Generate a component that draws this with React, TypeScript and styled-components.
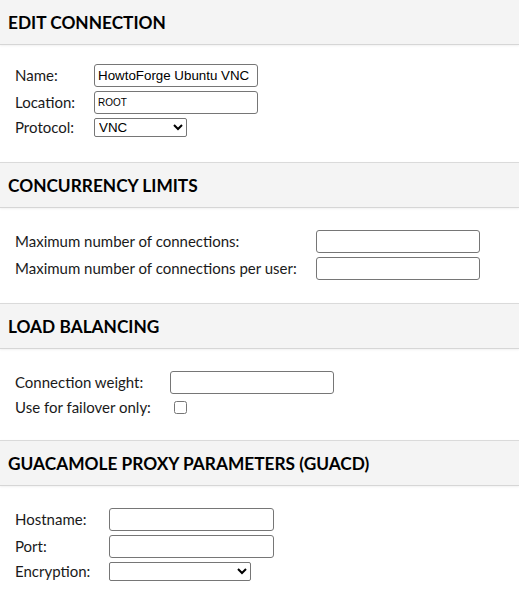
import React from "react";
import styled, { createGlobalStyle } from "styled-components";

const Global = createGlobalStyle`
  html, body { margin: 0; padding: 0; background: #fff; }
  body { font-family: Lato, "Noto Sans", sans-serif; color: #000; }
  * { box-sizing: border-box; }
`;

const Page = styled.div`
  display: flex;
  flex-direction: column;
  width: 519px;
`;

const Section = styled.section`
  display: flex;
  flex-direction: column;
`;

const Header = styled.h2<{ $first?: boolean }>`
  margin: 0;
  height: ${(p) => (p.$first ? "45px" : "46px")};
  display: flex;
  align-items: center;
  padding: 0 8px 0;
  background: #f4f4f4;
  border-top: ${(p) => (p.$first ? "none" : "1px solid #dadada")};
  border-bottom: 1px solid #d6d6d6;
  box-shadow: 0 1px 2px rgba(0, 0, 0, 0.06);
  font-family: Lato, "Noto Sans", sans-serif;
  font-weight: 700;
  font-size: 17.3px;
  letter-spacing: 0;
  color: #000;
`;

const Body = styled.div<{ $top: number; $bottom: number }>`
  padding: ${(p) => p.$top}px 16px ${(p) => p.$bottom}px 15px;
`;

const Props = styled.div`
  display: grid;
  grid-template-columns: max-content max-content;
  column-gap: 19px;
  align-items: center;
`;

const Label = styled.div`
  padding: 2px 0;
  font-size: 15px;
  line-height: 19px;
  color: #1a1a1a;
`;

const Cell = styled.div`
  padding: 2px 0;
  display: flex;
  align-items: center;
  min-height: 23px;
`;

const TextInput = styled.input<{ $w: number; $small?: boolean }>`
  width: ${(p) => p.$w}px;
  height: 23px;
  margin: 0;
  padding: 0 3px;
  border: 1px solid #767676;
  border-radius: 3px;
  font-family: "Liberation Sans", Arial, sans-serif;
  font-size: ${(p) => (p.$small ? "10px" : "13.33px")};
  color: #000;
  background: #fff;
  outline: none;
`;

const Select = styled.select<{ $w: number }>`
  width: ${(p) => p.$w}px;
  height: 19px;
  margin: 0;
  border: 1px solid #767676;
  border-radius: 2px;
  font-family: "Liberation Sans", Arial, sans-serif;
  font-size: 13.33px;
  background: #fff;
  color: #000;
`;

const Check = styled.input`
  width: 13px;
  height: 13px;
  margin: 3px 3px 3px 4px;
`;

export default function App() {
  return (
    <Page>
      <Global />
      <Section>
        <Header $first>EDIT CONNECTION</Header>
        <Body $top={17} $bottom={23}>
          <Props>
            <Label>Name:</Label>
            <Cell>
              <TextInput $w={164} type="text" defaultValue="HowtoForge Ubuntu VNC" />
            </Cell>
            <Label>Location:</Label>
            <Cell>
              <TextInput $w={164} $small type="text" defaultValue="ROOT" />
            </Cell>
            <Label>Protocol:</Label>
            <Cell>
              <Select $w={93} defaultValue="vnc">
                <option value="vnc">VNC</option>
                <option value="rdp">RDP</option>
                <option value="ssh">SSH</option>
              </Select>
            </Cell>
          </Props>
        </Body>
      </Section>
      <Section>
        <Header>CONCURRENCY LIMITS</Header>
        <Body $top={20} $bottom={21}>
          <Props>
            <Label>Maximum number of connections:</Label>
            <Cell>
              <TextInput $w={164} type="text" />
            </Cell>
            <Label>Maximum number of connections per user:</Label>
            <Cell>
              <TextInput $w={164} type="text" />
            </Cell>
          </Props>
        </Body>
      </Section>
      <Section>
        <Header>LOAD BALANCING</Header>
        <Body $top={20} $bottom={21}>
          <Props>
            <Label>Connection weight:</Label>
            <Cell>
              <TextInput $w={164} type="text" />
            </Cell>
            <Label>Use for failover only:</Label>
            <Cell>
              <Check type="checkbox" />
            </Cell>
          </Props>
        </Body>
      </Section>
      <Section>
        <Header>GUACAMOLE PROXY PARAMETERS (GUACD)</Header>
        <Body $top={20} $bottom={21}>
          <Props>
            <Label>Hostname:</Label>
            <Cell>
              <TextInput $w={165} type="text" />
            </Cell>
            <Label>Port:</Label>
            <Cell>
              <TextInput $w={165} type="text" />
            </Cell>
            <Label>Encryption:</Label>
            <Cell>
              <Select $w={142} defaultValue="">
                <option value=""></option>
                <option value="none">None (unencrypted)</option>
                <option value="ssl">SSL / TLS</option>
              </Select>
            </Cell>
          </Props>
        </Body>
      </Section>
    </Page>
  );
}
